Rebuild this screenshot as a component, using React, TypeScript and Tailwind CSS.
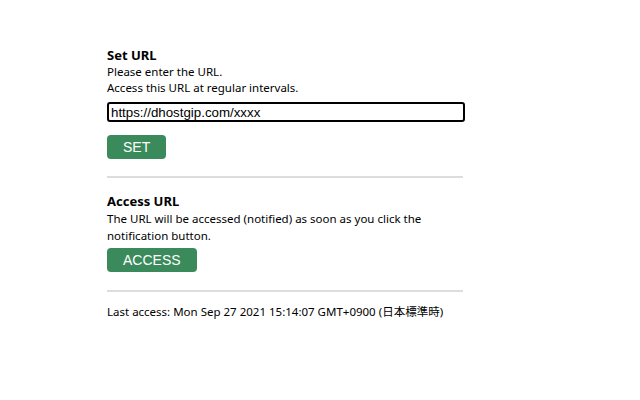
export default function App() {
  return (
    <div className="h-[400px] w-[640px] bg-white font-['Noto_Sans','Noto_Sans_CJK_JP',sans-serif] text-black">
      <div className="ml-[107px] w-[358px] pt-[46px]">
        <h2 className="text-[13px] font-bold leading-[18px]">Set URL</h2>
        <p className="text-[11.5px] leading-[16px]">Please enter the URL.</p>
        <p className="text-[11.5px] leading-[16px]">Access this URL at regular intervals.</p>
        <input
          type="text"
          defaultValue="https://dhostgip.com/xxxx"
          className="mt-[6px] block h-[20px] w-[358px] rounded-[3px] border-2 border-black px-[2px] font-['Liberation_Sans',sans-serif] text-[13.3px] outline-none"
        />
        <button className="mt-[13px] block h-[24px] rounded-[4px] bg-[#3b8a5c] px-4 font-['Liberation_Sans',sans-serif] text-[14px] text-white">
          SET
        </button>
        <div className="mt-[17px] h-[2px] w-[356px] bg-[#dddddd]" />
        <h2 className="mt-[14px] text-[13px] font-bold leading-[18px]">Access URL</h2>
        <p className="text-[11.5px] leading-[17px]">
          The URL will be accessed (notified) as soon as you click the notification button.
        </p>
        <button className="mt-[4px] block h-[24px] rounded-[4px] bg-[#3b8a5c] px-4 font-['Liberation_Sans',sans-serif] text-[14px] text-white">
          ACCESS
        </button>
        <div className="mt-[18px] h-[2px] w-[356px] bg-[#dddddd]" />
        <p className="mt-[12px] text-[11.5px] leading-[16px]">
          Last access: Mon Sep 27 2021 15:14:07 GMT+0900 (日本標準時)
        </p>
      </div>
    </div>
  );
}
